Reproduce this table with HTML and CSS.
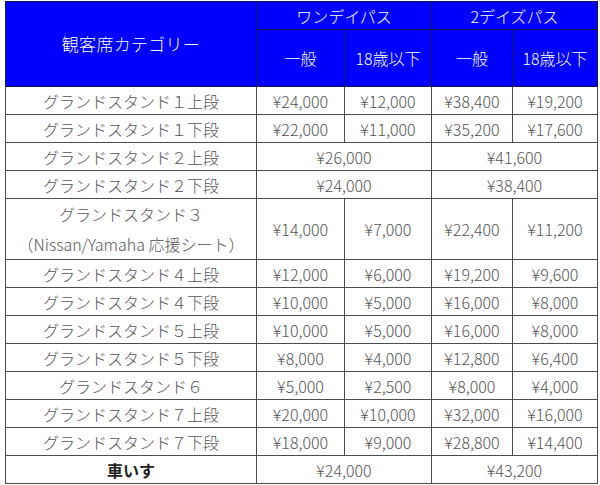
FILE: index.html
```html
<!DOCTYPE html>
<html lang="ja">
<head>
<meta charset="utf-8">
<link rel="stylesheet" href="styles.css">
</head>
<body>
<table class="price">
  <colgroup>
    <col class="c-cat"><col class="c-a"><col class="c-b"><col class="c-c"><col class="c-d">
  </colgroup>
  <thead>
    <tr class="h1">
      <th rowspan="2" class="cat">観客席カテゴリー</th>
      <th colspan="2">ワンデイパス</th>
      <th colspan="2">2デイズパス</th>
    </tr>
    <tr class="h2">
      <th>一般</th><th>18歳以下</th><th>一般</th><th>18歳以下</th>
    </tr>
  </thead>
  <tbody>
    <tr><td>グランドスタンド１上段</td><td>¥24,000</td><td>¥12,000</td><td>¥38,400</td><td>¥19,200</td></tr>
    <tr><td>グランドスタンド１下段</td><td>¥22,000</td><td>¥11,000</td><td>¥35,200</td><td>¥17,600</td></tr>
    <tr><td>グランドスタンド２上段</td><td colspan="2">¥26,000</td><td colspan="2">¥41,600</td></tr>
    <tr><td>グランドスタンド２下段</td><td colspan="2">¥24,000</td><td colspan="2">¥38,400</td></tr>
    <tr class="tall"><td>グランドスタンド３<br>（Nissan/Yamaha 応援シート）</td><td>¥14,000</td><td>¥7,000</td><td>¥22,400</td><td>¥11,200</td></tr>
    <tr><td>グランドスタンド４上段</td><td>¥12,000</td><td>¥6,000</td><td>¥19,200</td><td>¥9,600</td></tr>
    <tr><td>グランドスタンド４下段</td><td>¥10,000</td><td>¥5,000</td><td>¥16,000</td><td>¥8,000</td></tr>
    <tr><td>グランドスタンド５上段</td><td>¥10,000</td><td>¥5,000</td><td>¥16,000</td><td>¥8,000</td></tr>
    <tr><td>グランドスタンド５下段</td><td>¥8,000</td><td>¥4,000</td><td>¥12,800</td><td>¥6,400</td></tr>
    <tr><td>グランドスタンド６</td><td>¥5,000</td><td>¥2,500</td><td>¥8,000</td><td>¥4,000</td></tr>
    <tr><td>グランドスタンド７上段</td><td>¥20,000</td><td>¥10,000</td><td>¥32,000</td><td>¥16,000</td></tr>
    <tr><td>グランドスタンド７下段</td><td>¥18,000</td><td>¥9,000</td><td>¥28,800</td><td>¥14,400</td></tr>
    <tr><td class="strong">車いす</td><td colspan="2">¥24,000</td><td colspan="2">¥43,200</td></tr>
  </tbody>
</table>
</body>
</html>
```
FILE: styles.css
```css
html, body {
  margin: 0;
  padding: 0;
  background: #ffffff;
}
body {
  padding: 1px 0 0 5px;
  font-family: "Noto Sans CJK JP", "Noto Sans", sans-serif;
}
.price {
  border-collapse: collapse;
  table-layout: fixed;
  width: 592px;
  font-size: 16px;
  font-weight: 300;
}
.c-cat { width: 251px; }
.c-a { width: 88px; }
.c-b { width: 87px; }
.c-c { width: 81px; }
.c-d { width: 85px; }
.price th {
  background: #0000ff;
  color: #ffffff;
  font-weight: 300;
  border: 1px solid #1a1a4a;
  text-align: center;
  padding: 0;
  line-height: 20px;
}
.price th.cat {
  font-size: 17px;
  letter-spacing: 0.3px;
}
.price .h1 { height: 28px; }
.price .h2 { height: 57px; }
.price td {
  border: 1px solid #4d4d4d;
  color: #555555;
  text-align: center;
  padding: 0;
  height: 27px;
  line-height: 20px;
  white-space: nowrap;
}
.price .tall td {
  height: 59px;
  line-height: 30px;
}
.price td.strong {
  font-weight: bold;
  color: #222222;
}
```
